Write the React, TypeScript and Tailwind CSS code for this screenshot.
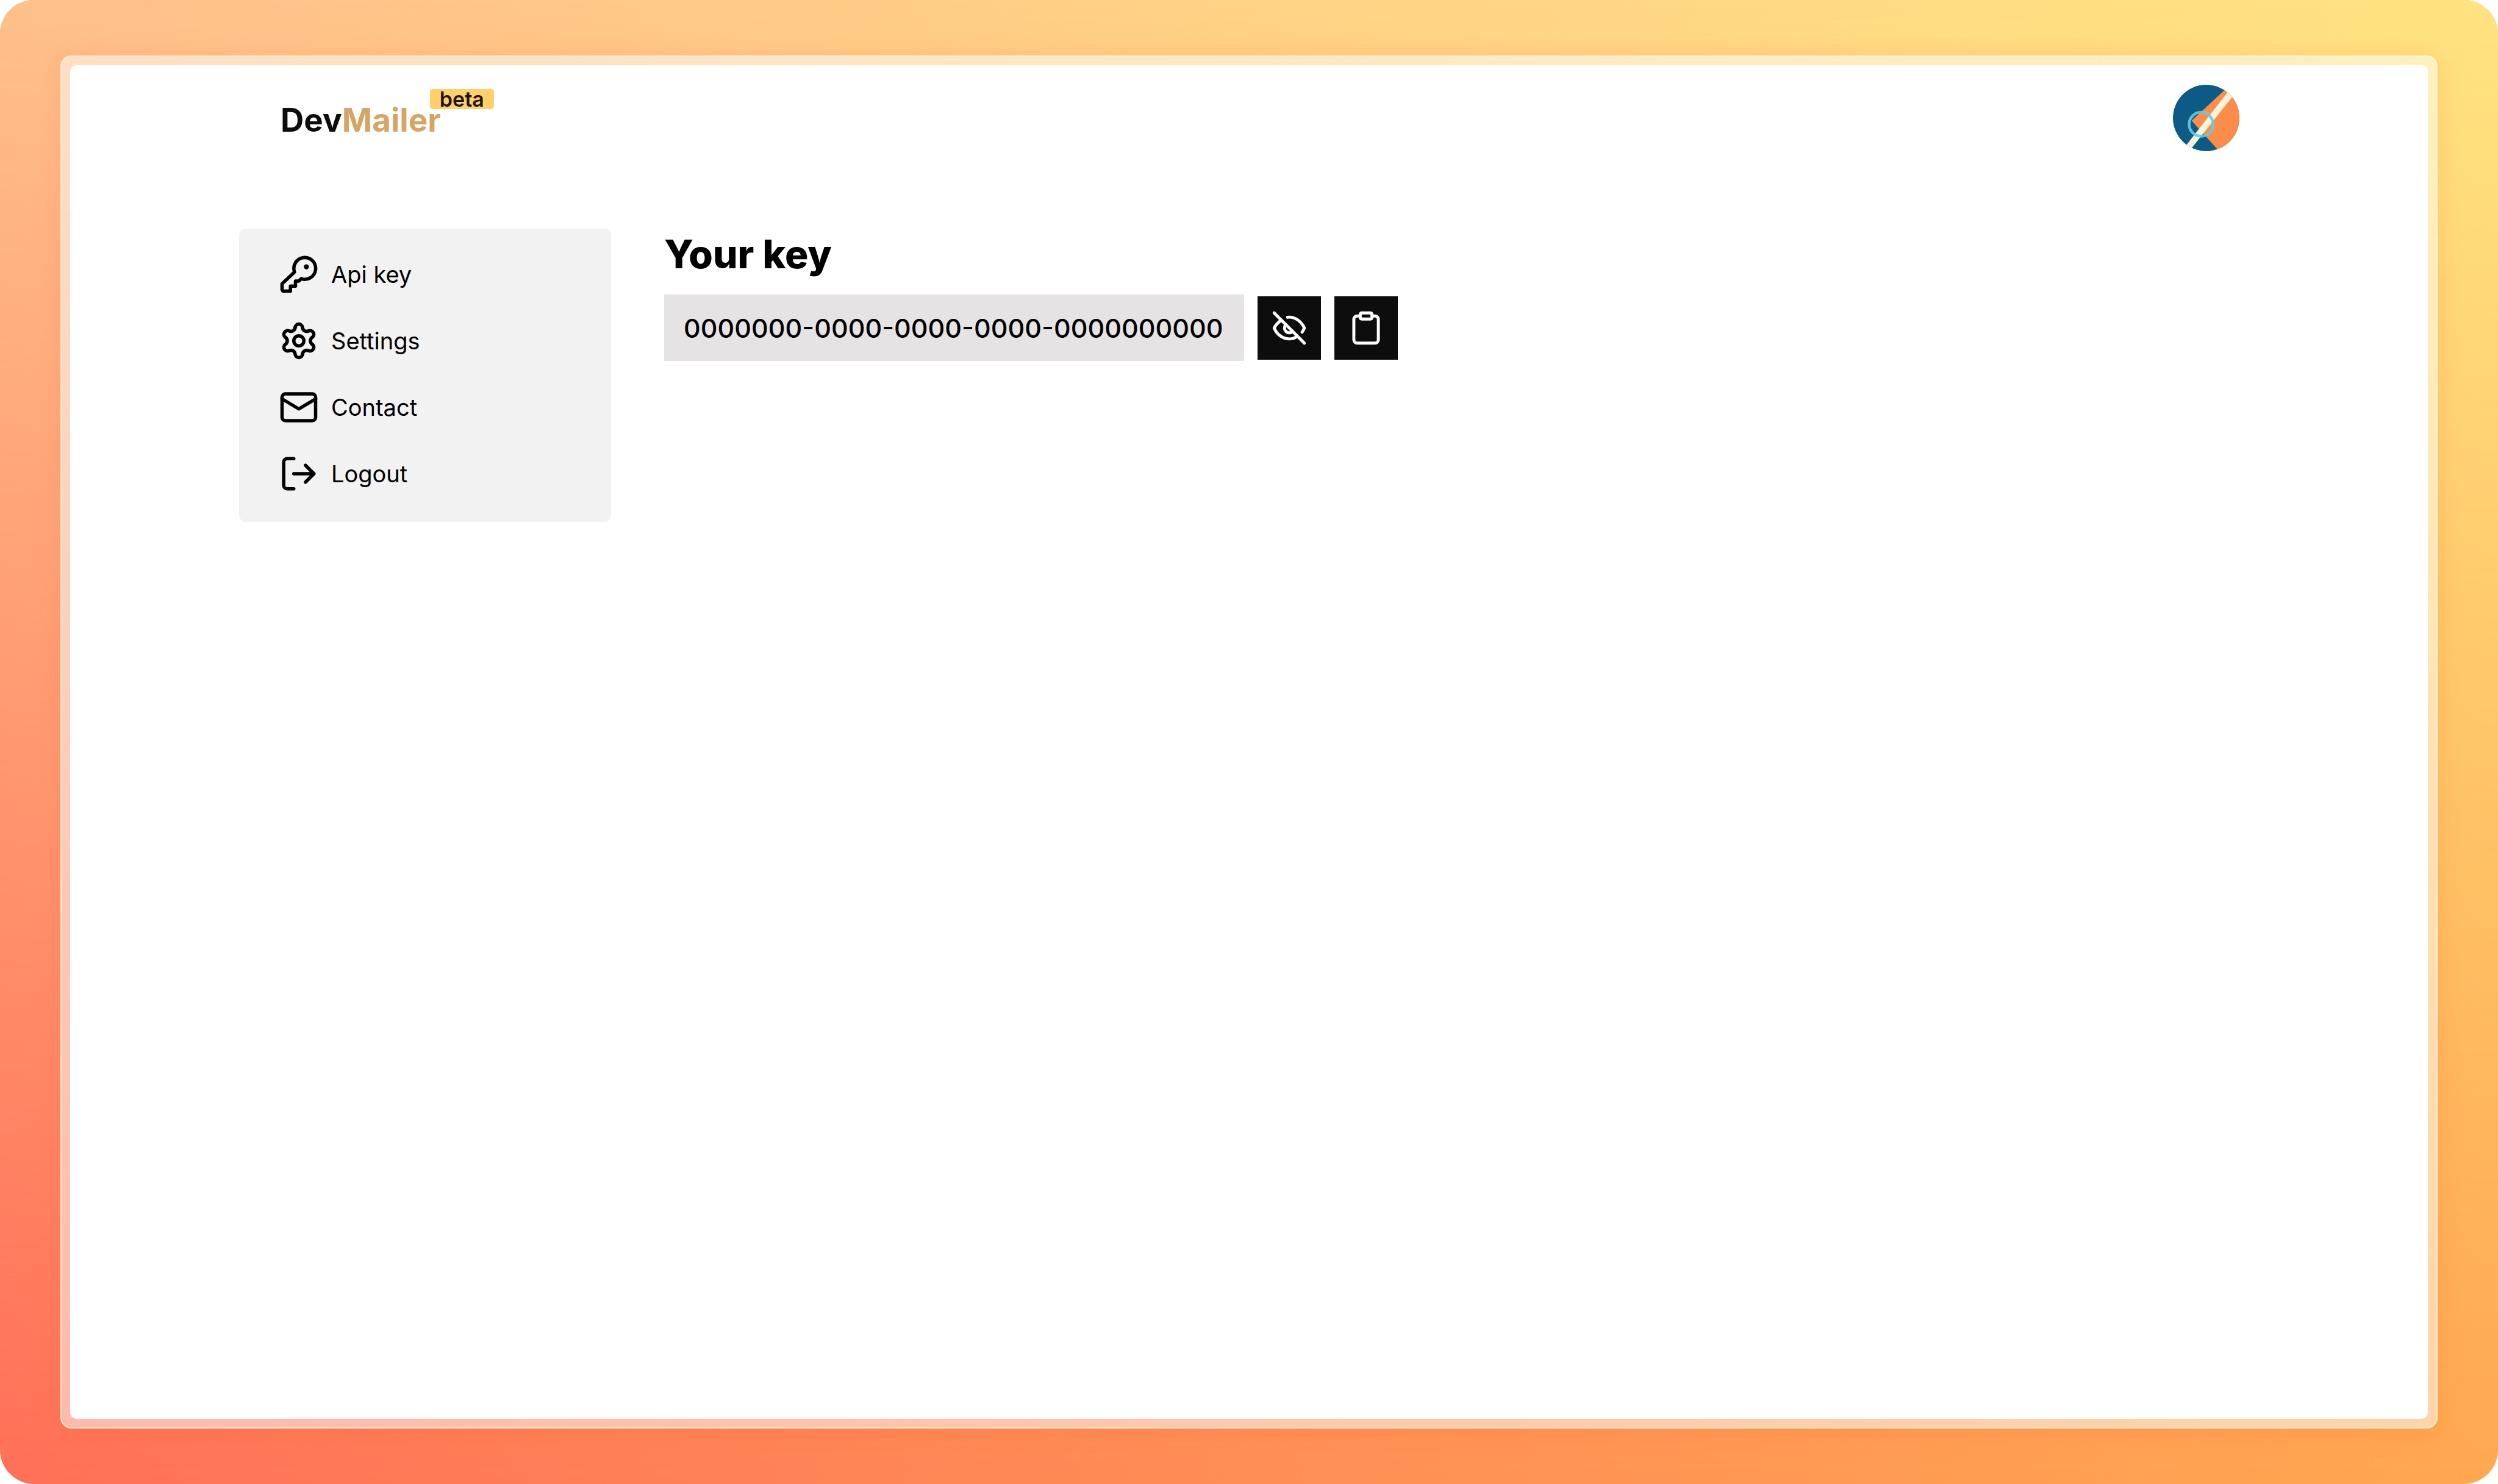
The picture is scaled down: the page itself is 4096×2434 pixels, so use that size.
import type { ReactNode } from "react";

const GEAR_ANGLES = [0, 60, 120, 180, 240, 300];

function Icon({ children, strokeWidth = 2 }: { children: ReactNode; strokeWidth?: number }) {
  return (
    <svg
      viewBox="0 0 24 24"
      fill="none"
      stroke="currentColor"
      strokeWidth={strokeWidth}
      strokeLinecap="round"
      strokeLinejoin="round"
      aria-hidden="true"
      className="size-[66px] shrink-0"
    >
      {children}
    </svg>
  );
}

const KeyIcon = () => (
  <Icon>
    <path d="M2 17.6V21a1 1 0 0 0 1 1h4v-3h3v-3h2l1.4-1.4a6.5 6.5 0 1 0-4-4Z" />
    <circle cx="16.5" cy="7.5" r="1.5" fill="currentColor" stroke="none" />
  </Icon>
);

const GearIcon = () => (
  <Icon>
    {GEAR_ANGLES.map((a) => (
      <path
        key={a}
        d="M9.81 4.03A2.2 2.2 0 0 1 14.19 4.03A2.53 2.53 0 0 0 17.81 6.12"
        transform={`rotate(${a} 12 12)`}
      />
    ))}
    <circle cx="12" cy="12" r="3" />
  </Icon>
);

const MailIcon = () => (
  <Icon>
    <rect x="2" y="4" width="20" height="16" rx="2" />
    <path d="M2 7l10 6 10-6" />
  </Icon>
);

const LogoutIcon = () => (
  <Icon>
    <path d="M9 3H5a2 2 0 0 0-2 2v14a2 2 0 0 0 2 2h4" />
    <path d="M9 12h12M16 7l5 5-5 5" />
  </Icon>
);

const EyeOffIcon = () => (
  <Icon strokeWidth={1.8}>
    <path d="M3 3l18 18" />
    <path d="M11 5.6Q11.5 5.5 12 5.5c4 0 7.4 2.9 9 6.5a14 14 0 0 1-1.3 2.4" />
    <path d="M7.2 7.4C5.4 8.6 3.9 10.2 3 12c1.6 3.8 5 6.5 9 6.5 1.7 0 3.3-.5 4.7-1.5" />
    <path d="M10 10a2.8 2.8 0 0 0 4 4" />
  </Icon>
);

const ClipboardIcon = () => (
  <Icon strokeWidth={1.8}>
    <path d="M8.5 4.8H6.7a2 2 0 0 0-2 2V19a2 2 0 0 0 2 2h10.6a2 2 0 0 0 2-2V6.8a2 2 0 0 0-2-2h-1.8" />
    <rect x="8.5" y="3" width="7" height="3.6" rx="0.8" />
  </Icon>
);

function Avatar() {
  return (
    <svg viewBox="82 62 588 588" className="size-full" aria-hidden="true">
      <clipPath id="avatar-clip">
        <circle cx="376" cy="356" r="294" />
      </clipPath>
      <g clipPath="url(#avatar-clip)">
        <rect x="82" y="62" width="588" height="588" fill="#0e5a86" />
        <path d="M580 70L247 380L500 660H700V70Z" fill="#fb8c49" />
        <path d="M604 80L180 622L226 650L650 115Z" fill="#f3f4d9" />
        <circle cx="331" cy="411" r="106" fill="none" stroke="#62cbe8" strokeOpacity="0.9" strokeWidth="25" />
      </g>
    </svg>
  );
}

const MENU = [
  { label: "Api key", icon: KeyIcon },
  { label: "Settings", icon: GearIcon },
  { label: "Contact", icon: MailIcon },
  { label: "Logout", icon: LogoutIcon },
];

export default function App() {
  return (
    <div className="min-h-screen bg-white font-['Inter',sans-serif] text-black">
      <div className="relative isolate flex min-h-screen overflow-hidden rounded-[56px] bg-linear-to-r from-[#ff7058] to-[#ffa850] px-[99px] py-[91px]">
        <div className="absolute inset-0 -z-10 bg-linear-to-r from-[#ffc08a] to-[#ffe481] mask-linear-180 mask-linear-from-0% mask-linear-to-100%" />

        <div className="flex flex-1 rounded-[18px] border-2 border-[#fff5e1bf] bg-white/50 p-[14px] shadow-[0_6px_36px_rgba(250,100,40,0.2)]">
          <div className="flex-1 rounded-[10px] bg-white pt-8">
            <div className="mx-auto w-full max-w-[3312px]">
              <header className="flex items-center justify-between pr-8 pl-[68px]">
                <a href="#" className="relative pt-1.5 text-[53px] leading-[64px] font-bold text-[#0d0d0d]">
                  Dev<span className="text-[#d6a465]">Mailer</span>
                  <span className="absolute -top-[13px] left-full -ml-[18px] rounded-[5px] bg-[#ffcf69] px-4 text-[34px] leading-[33px] font-semibold text-[#1d1405]">
                    beta
                  </span>
                </a>
                <button type="button" aria-label="Account" className="size-[109px] rounded-full">
                  <Avatar />
                </button>
              </header>

              <div className="mt-[127px] flex items-start gap-[87px]">
                <nav className="w-[610px] shrink-0 rounded-[11px] bg-[#f2f2f2] px-[65px] pt-[42px] pb-[46px]">
                  <ul className="flex flex-col gap-[43px]">
                    {MENU.map(({ label, icon: ItemIcon }) => (
                      <li key={label}>
                        <a href="#" className="flex items-center gap-5 text-[38px] leading-[66px]">
                          <ItemIcon />
                          {label}
                        </a>
                      </li>
                    ))}
                  </ul>
                </nav>

                <main className="flex-1">
                  <h1 className="mb-6 text-[64px] leading-[84px] font-extrabold">
                    <label htmlFor="api-key">Your key</label>
                  </h1>
                  <div className="flex items-center gap-[22px]">
                    <input
                      id="api-key"
                      type="text"
                      readOnly
                      value="0000000-0000-0000-0000-0000000000"
                      className="h-[109px] w-[951px] bg-[#e5e3e4] px-8 text-[43px] font-medium outline-none"
                    />
                    <button
                      type="button"
                      aria-label="Hide key"
                      className="flex size-[104px] items-center justify-center bg-[#0d0d0d] text-white"
                    >
                      <EyeOffIcon />
                    </button>
                    <button
                      type="button"
                      aria-label="Copy key"
                      className="flex size-[104px] items-center justify-center bg-[#0d0d0d] text-white"
                    >
                      <ClipboardIcon />
                    </button>
                  </div>
                </main>
              </div>
            </div>
          </div>
        </div>
      </div>
    </div>
  );
}
